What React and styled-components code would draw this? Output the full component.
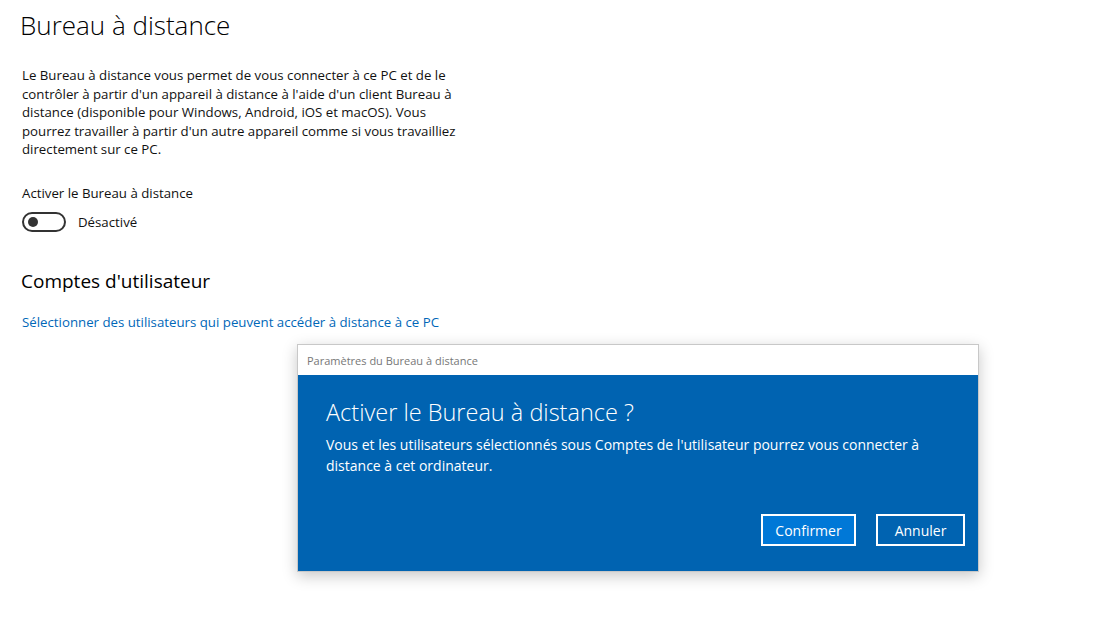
import React from 'react'
import styled, { createGlobalStyle } from 'styled-components'

const GlobalStyle = createGlobalStyle`
  html, body {
    margin: 0;
    padding: 0;
    background: #ffffff;
    font-family: "Open Sans", "Noto Sans", sans-serif;
    color: #000;
  }
  #root {
    width: 1095px;
    height: 630px;
    overflow: hidden;
    position: relative;
  }
`

const Page = styled.div`
  padding: 6px 0 0 22px;
  display: flex;
  flex-direction: column;
  width: 470px;
`

const Title = styled.h1`
  margin: 0 0 0 -2px;
  font-size: 26px;
  font-weight: 300;
  line-height: 38px;
`

const Description = styled.p`
  margin: 22px 0 0;
  font-size: 13.25px;
  line-height: 18.5px;
  color: #111;
`

const Label = styled.div`
  margin-top: 24px;
  font-size: 13.25px;
  line-height: 20px;
  color: #111;
`

const ToggleRow = styled.div`
  display: flex;
  align-items: center;
  gap: 12px;
  margin-top: 9px;
  font-size: 13.25px;
  color: #111;
`

const Track = styled.div`
  width: 36px;
  height: 16px;
  border: 2px solid #333;
  border-radius: 10px;
  display: flex;
  align-items: center;
  padding-left: 4px;
  box-sizing: content-box;
`

const Knob = styled.span`
  width: 10px;
  height: 10px;
  border-radius: 50%;
  background: #333;
`

const Section = styled.h2`
  margin: 35px 0 0 -1px;
  font-size: 19px;
  font-weight: 400;
  line-height: 28px;
`

const Link = styled.a`
  margin-top: 17px;
  font-size: 13.25px;
  line-height: 20px;
  color: #0067b8;
  text-decoration: none;
  white-space: nowrap;
`

const Dialog = styled.div`
  position: absolute;
  left: 297px;
  top: 344px;
  width: 682px;
  border: 1px solid #c8c8c8;
  box-sizing: border-box;
  box-shadow: 0 4px 14px rgba(0, 0, 0, 0.22);
  background: #0063b1;
  display: flex;
  flex-direction: column;
`

const TitleBar = styled.div`
  background: #ffffff;
  height: 30px;
  padding-left: 9px;
  display: flex;
  align-items: center;
  font-size: 11px;
  color: #777;
`

const Body = styled.div`
  padding: 22px 13px 25px 28px;
  color: #fff;
  display: flex;
  flex-direction: column;
`

const Heading = styled.div`
  font-size: 23.5px;
  font-weight: 300;
  line-height: 30px;
`

const Message = styled.div`
  margin-top: 7px;
  font-size: 14px;
  line-height: 21px;
  width: 610px;
`

const Actions = styled.div`
  display: flex;
  justify-content: flex-end;
  gap: 20px;
  margin-top: 38px;
`

const Button = styled.button`
  height: 32px;
  width: ${p => p.$w}px;
  border: 2px solid #fff;
  background: ${p => (p.$primary ? '#0078d7' : 'transparent')};
  color: #fff;
  font-family: inherit;
  font-size: 14px;
  padding: 0;
`

export default function App() {
  return (
    <>
      <GlobalStyle />
      <Page>
        <Title>Bureau à distance</Title>
        <Description>
          Le Bureau à distance vous permet de vous connecter à ce PC et de le<br />
          contrôler à partir d'un appareil à distance à l'aide d'un client Bureau à<br />
          distance (disponible pour Windows, Android, iOS et macOS). Vous<br />
          pourrez travailler à partir d'un autre appareil comme si vous travailliez<br />
          directement sur ce PC.
        </Description>
        <Label>Activer le Bureau à distance</Label>
        <ToggleRow>
          <Track>
            <Knob />
          </Track>
          Désactivé
        </ToggleRow>
        <Section>Comptes d'utilisateur</Section>
        <Link href="#">Sélectionner des utilisateurs qui peuvent accéder à distance à ce PC</Link>
      </Page>
      <Dialog>
        <TitleBar>Paramètres du Bureau à distance</TitleBar>
        <Body>
          <Heading>Activer le Bureau à distance ?</Heading>
          <Message>
            Vous et les utilisateurs sélectionnés sous Comptes de l'utilisateur pourrez vous connecter à
            distance à cet ordinateur.
          </Message>
          <Actions>
            <Button $primary $w={95}>Confirmer</Button>
            <Button $w={89}>Annuler</Button>
          </Actions>
        </Body>
      </Dialog>
    </>
  )
}
